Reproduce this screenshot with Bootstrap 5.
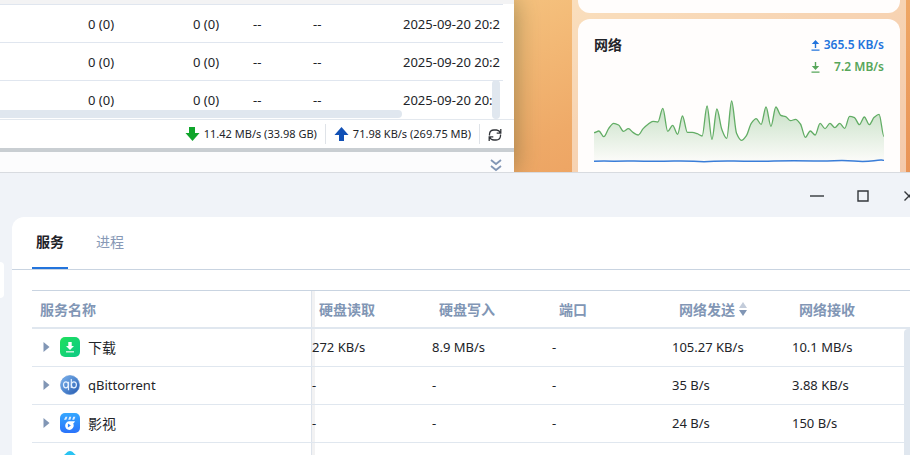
<!DOCTYPE html>
<html lang="zh-CN">
<head>
<meta charset="utf-8">
<meta name="viewport" content="width=device-width, initial-scale=1">
<title>服务</title>
<link href="https://cdn.jsdelivr.net/npm/bootstrap@5.3.0/dist/css/bootstrap.min.css" rel="stylesheet">
<style>
body{font-family:"Noto Sans","Noto Sans CJK SC",sans-serif;font-size:13px;line-height:20px;color:#222429;background:#f0f3f8}
.zh{font-family:"Noto Sans CJK SC",sans-serif;font-size:14px}
.desktop{background:linear-gradient(155deg,#f0cb8c 0%,#f6c480 38%,#efaa68 66%,#e99457 100%)}
.client{flex:0 0 514px;box-shadow:0 0 24px rgba(70,80,40,.5)}
.peers{border-top:4px solid #f3f3f4;padding-right:11px}
.peers table{table-layout:fixed;width:100%}
.peers td{height:38px;padding:0 0 0 9px;border-top:1px solid #e0e6ef;white-space:nowrap}
.hbar,.vbar,.sbar{background:#e0e7ef}
.hbar{left:0;bottom:1px;width:402px;height:8px;border-radius:0 4px 4px 0}
.vbar{right:14px;bottom:0;width:8px;height:39px;border-radius:4px}
.statusbar{height:29px;border-top:1px solid #e3e8ee;font-size:11px;padding-right:12px}
.statusbar .sep{width:1px;height:20px;background:#dfe3e8;margin:0 8px}
.splitter{height:4px;background:#c9ced2}
.drawer{height:20px;background:#fcfcfd;padding-right:12px}
.widgets{flex:0 0 334px;padding:0 6px;background:rgba(255,255,255,.5)}
.tile{background:#fffdfc}
.tile-prev{height:13px;border-radius:0 0 12px 12px}
.tile-net{border-radius:12px 12px 0 0;margin-top:6px;padding:15px 16px 0}
.tile-net h2{font-size:14px;line-height:20px}
.rates{font-size:12px;line-height:22px;font-weight:600}
.rates svg{margin-right:4px}
.up{color:#2374dc}.down{color:#57a65a}
.chart{height:70px;margin-top:17px}
.win{border-top:1px solid #d8dbe0}
.caption{height:44px;margin-right:-22px}
.caption button{width:46px;height:44px}
.rail{flex:0 0 12px;padding-top:45px}
.rail div{width:4px;height:36px;background:#fff;border-radius:0 4px 4px 0}
.sheet{border-top-left-radius:12px}
.tabs{height:53px;padding-left:20px;border-bottom:1px solid #c9d4e1}
.tabs button{width:36px;margin-right:24px;padding:0;border-bottom:2px solid transparent;color:#8799b6;white-space:nowrap}
.tabs button.active{color:#1f2329;border-color:#2374dc;font-weight:700}
.services{margin:20px 0 0 20px}
.services table{table-layout:fixed;width:100%;min-width:880px}
.services th{height:38px;padding:0 7px;border-top:1px solid #c9d4e1;border-bottom:2px solid #e0e7ef;color:#8196b5;font-weight:700;white-space:nowrap}
.services td{height:38px;padding:0;border-bottom:1px solid #e0e7ef;white-space:nowrap}
.services tr>:first-child{padding-left:8px;box-shadow:inset -1px 0 #dde3eb}
.services tr>:nth-child(2){background:linear-gradient(#f2f2f3,#f2f2f3) left top/3px 100% no-repeat}
.sbar{right:0;top:39px;bottom:0;width:6px;border-radius:4px 0 0 0}
.tri{width:7px;margin:0 10px 0 3px}
</style>
<script src="https://cdn.jsdelivr.net/npm/bootstrap@5.3.0/dist/js/bootstrap.bundle.min.js"></script>
</head>
<body class="vh-100 overflow-hidden">
<div class="desktop d-flex overflow-hidden">
  <section class="client bg-white position-relative">
    <div class="peers position-relative">
      <table>
        <colgroup><col style="width:79px"><col style="width:105px"><col style="width:60px"><col style="width:60px"><col style="width:90px"><col></colgroup>
        <tbody>
        <tr><td></td><td>0 (0)</td><td>0 (0)</td><td>--</td><td>--</td><td>2025-09-20 20:2</td></tr>
        <tr><td></td><td>0 (0)</td><td>0 (0)</td><td>--</td><td>--</td><td>2025-09-20 20:2</td></tr>
        <tr><td></td><td>0 (0)</td><td>0 (0)</td><td>--</td><td>--</td><td>2025-09-20 20:2</td></tr>
        </tbody>
      </table>
      <div class="hbar position-absolute"></div>
      <div class="vbar position-absolute"></div>
    </div>
    <div class="statusbar d-flex align-items-center justify-content-end">
      <svg class="me-1" width="15" height="14" viewBox="0 0 15 14" fill="#0fa52b"><path d="M4 0h6v6h4.500L7.500 14 .5 6H4z"/></svg>
      <span>11.42 MB/s (33.98 GB)</span>
      <span class="sep"></span>
      <svg class="me-1" width="15" height="14" viewBox="0 0 15 14" fill="#1150b5"><path d="M7.500 0l7 8H10v6H5V8H.5z"/></svg>
      <span>71.98 KB/s (269.75 MB)</span>
      <span class="sep"></span>
      <button class="btn p-0 border-0 lh-1" aria-label="刷新"><svg width="14" height="14" viewBox="0 0 14 14" fill="none" stroke="#303338" stroke-width="1.300"><path d="M1.500 7.500V6a4.500 4.500 0 0 1 4.500-4h2.500a5 5 0 0 1 4 3M12.800 1v4.200H8.700M12.500 6.500V8A4.500 4.500 0 0 1 8 12H6a5 5 0 0 1-4.500-3M1.200 13V8.800h4.100"/></svg></button>
    </div>
    <div class="splitter"></div>
    <div class="drawer d-flex align-items-center justify-content-end">
      <button class="btn p-0 border-0 lh-1 mt-1" aria-label="展开"><svg width="12" height="13" viewBox="0 0 12 13" fill="none" stroke="#8196b5" stroke-width="1.800"><path d="M1 1l5 4 5-4M1 7l5 4 5-4"/></svg></button>
    </div>
  </section>
  <div class="flex-grow-1 d-flex justify-content-end pe-1">
    <aside class="widgets d-flex flex-column">
      <div class="tile tile-prev"></div>
      <section class="tile tile-net flex-grow-1">
        <div class="d-flex justify-content-between">
          <h2 class="zh fw-bold mb-0">网络</h2>
          <div class="rates">
            <div class="up d-flex justify-content-between align-items-center"><svg width="9" height="11" viewBox="0 0 9 11"><path fill="currentColor" d="M4.500 0l3.700 4H5.200v4H3.800V4H.8zM.5 9.500h8v1.200h-8z"/></svg><span>365.5 KB/s</span></div>
            <div class="down d-flex justify-content-between align-items-center"><svg width="9" height="11" viewBox="0 0 9 11"><path fill="currentColor" d="M3.800 0h1.400v4h3L4.500 8 .8 4h3zM.5 9.500h8v1.200h-8z"/></svg><span>7.2 MB/s</span></div>
          </div>
        </div>
        <svg class="chart d-block w-100" viewBox="0 0 870 210" preserveAspectRatio="none">
          <defs><linearGradient id="fade" x1="0" y1="0" x2="0" y2="1"><stop offset="0" stop-color="#57a65a" stop-opacity=".36"/><stop offset="1" stop-color="#57a65a" stop-opacity=".02"/></linearGradient></defs>
          <path id="area" fill="url(#fade)"/>
          <path id="line" fill="none" stroke="#62ad65" stroke-width="1.300" vector-effect="non-scaling-stroke"/>
          <path fill="none" stroke="#3a7dd8" stroke-width="1.500" vector-effect="non-scaling-stroke" d="M0 199q30-2 60 0q30-2 60-1t60 1 60-1 60 1 60 0 60-1 60 1 60-1 60-1 60 1 60-1 60 1 60-1 30 1"/>
        </svg>
      </section>
    </aside>
  </div>
</div>

<main class="win overflow-hidden">
  <div class="caption d-flex justify-content-end">
    <button class="btn p-0 border-0 rounded-0" aria-label="最小化"><svg width="14" height="14" viewBox="0 0 14 14"><path d="M0 7h14" stroke="#33373b" stroke-width="1.400"/></svg></button>
    <button class="btn p-0 border-0 rounded-0" aria-label="最大化"><svg width="12" height="12" viewBox="0 0 12 12"><path d="M1 1h10v10H1z" fill="none" stroke="#33373b" stroke-width="1.400"/></svg></button>
    <button class="btn p-0 border-0 rounded-0" aria-label="关闭"><svg width="10" height="10" viewBox="0 0 10 10"><path d="M.5.5l9 9m0-9l-9 9" stroke="#33373b" stroke-width="1.400"/></svg></button>
  </div>
  <div class="d-flex">
    <div class="rail"><div></div></div>
    <section class="sheet bg-white flex-grow-1 overflow-hidden">
      <div class="tabs zh d-flex" role="tablist">
        <button class="btn rounded-0 border-top-0 border-start-0 border-end-0 zh active" role="tab" aria-selected="true">服务</button>
        <button class="btn rounded-0 border-top-0 border-start-0 border-end-0 zh" role="tab" aria-selected="false">进程</button>
      </div>
      <div class="services position-relative">
        <table>
          <colgroup><col style="width:280px"><col style="width:120px"><col style="width:120px"><col style="width:120px"><col style="width:120px"><col></colgroup>
          <thead><tr class="zh"><th>服务名称</th><th>硬盘读取</th><th>硬盘写入</th><th>端口</th><th><span class="d-flex align-items-center">网络发送<svg class="ms-1" width="8" height="14" viewBox="0 0 8 14"><path d="M4 0l4 6H0z" fill="#c3ccda"/><path d="M4 14L0 8h8z" fill="#8196b5"/></svg></span></th><th>网络接收</th></tr></thead>
          <tbody>
            <tr><td><div class="d-flex align-items-center"><svg class="tri" width="7" height="10" viewBox="0 0 7 10"><path d="M.5 0L6.500 5l-6 5z" fill="#8196b5"/></svg>
              <svg class="me-2" width="20" height="20" viewBox="0 0 20 20"><defs><linearGradient id="g1" x1="0" y1="0" x2="1" y2="1"><stop stop-color="#1fe05b"/><stop offset="1" stop-color="#0cc988"/></linearGradient></defs><rect width="20" height="20" rx="5" fill="url(#g1)"/><path d="M8.300 5h3.400v4H14l-4 4-4-4h2.300z" fill="#fff"/><path d="M6 14.800h8" stroke="#fff" stroke-width="1.400" opacity=".8"/></svg><span class="zh">下载</span></div></td>
              <td>272 KB/s</td><td>8.9 MB/s</td><td>-</td><td>105.27 KB/s</td><td>10.1 MB/s</td></tr>
            <tr><td><div class="d-flex align-items-center"><svg class="tri" width="7" height="10" viewBox="0 0 7 10"><path d="M.5 0L6.500 5l-6 5z" fill="#8196b5"/></svg>
              <svg class="me-2" width="20" height="20" viewBox="0 0 20 20"><defs><linearGradient id="g2" x1="0" y1="0" x2="1" y2="1"><stop stop-color="#7db6f0"/><stop offset="1" stop-color="#2458ae"/></linearGradient></defs><circle cx="10" cy="10" r="9.500" fill="url(#g2)" stroke="#5a8fd3" stroke-width=".6"/><g fill="none" stroke="#e6f1ff" stroke-width="1.200"><ellipse cx="5.900" cy="9.800" rx="2.400" ry="3"/><path d="M8.500 6.800v8.400M11.300 4v9"/><ellipse cx="13.900" cy="9.800" rx="2.500" ry="3"/></g></svg><span>qBittorrent</span></div></td>
              <td>-</td><td>-</td><td>-</td><td>35 B/s</td><td>3.88 KB/s</td></tr>
            <tr><td><div class="d-flex align-items-center"><svg class="tri" width="7" height="10" viewBox="0 0 7 10"><path d="M.5 0L6.500 5l-6 5z" fill="#8196b5"/></svg>
              <svg class="me-2" width="20" height="20" viewBox="0 0 20 20"><defs><linearGradient id="g3" x1="0" y1="0" x2="0" y2="1"><stop stop-color="#35a7ff"/><stop offset="1" stop-color="#2a73fa"/></linearGradient></defs><rect width="20" height="20" rx="5" fill="url(#g3)"/><path d="M5.500 3.800h2L6.300 6.800H4zM9.300 3.800h2l-.9 3H8.200zM13.200 3.800h2.200l-1.200 3h-2z" fill="#fff" opacity=".85"/><path fill-rule="evenodd" d="M9 8.300h6l-1.200 2h-.7A4.300 4.300 0 1 1 9 8.300zM7.900 10.600v3.800l3-1.900z" fill="#fff"/></svg><span class="zh">影视</span></div></td>
              <td>-</td><td>-</td><td>-</td><td>24 B/s</td><td>150 B/s</td></tr>
            <tr><td><div class="d-flex align-items-center"><span class="tri"></span><svg width="20" height="20" viewBox="0 0 20 20"><path d="M10 0c3 0 4 3 6 4s4 3 4 7a9 9 0 0 1-20 0c0-4 2-6 4-7s3-4 6-4z" fill="#29c3f2"/></svg></div></td><td></td><td></td><td></td><td></td><td></td></tr>
          </tbody>
        </table>
        <div class="sbar position-absolute"></div>
      </div>
    </section>
  </div>
</main>
<script>
// Download rate samples, measured from the top of the 210-unit plot.
const samples=[113,108,125,100,85,90,109,101,113,120,101,88,79,81,40,109,91,118,63,112,112,116,123,33,133,42,103,130,18,115,136,122,85,71,88,36,94,36,61,65,77,73,87,127,108,120,85,101,85,98,85,100,64,68,89,66,89,67,58,125];
const step=870/(samples.length-1);
const slope=samples.map((v,i)=>{
  if(i===0||i===samples.length-1)return 0;
  const a=v-samples[i-1],b=samples[i+1]-v;
  return a*b<=0?0:2*a*b/(a+b);
});
let d="M0 "+samples[0];
for(let i=1;i<samples.length;i++){
  d+=`C${(i-2/3)*step} ${samples[i-1]+slope[i-1]/3} ${(i-1/3)*step} ${samples[i]-slope[i]/3} ${i*step} ${samples[i]}`;
}
document.getElementById("line").setAttribute("d",d);
document.getElementById("area").setAttribute("d",d+"V198H0Z");
</script>
</body>
</html>
